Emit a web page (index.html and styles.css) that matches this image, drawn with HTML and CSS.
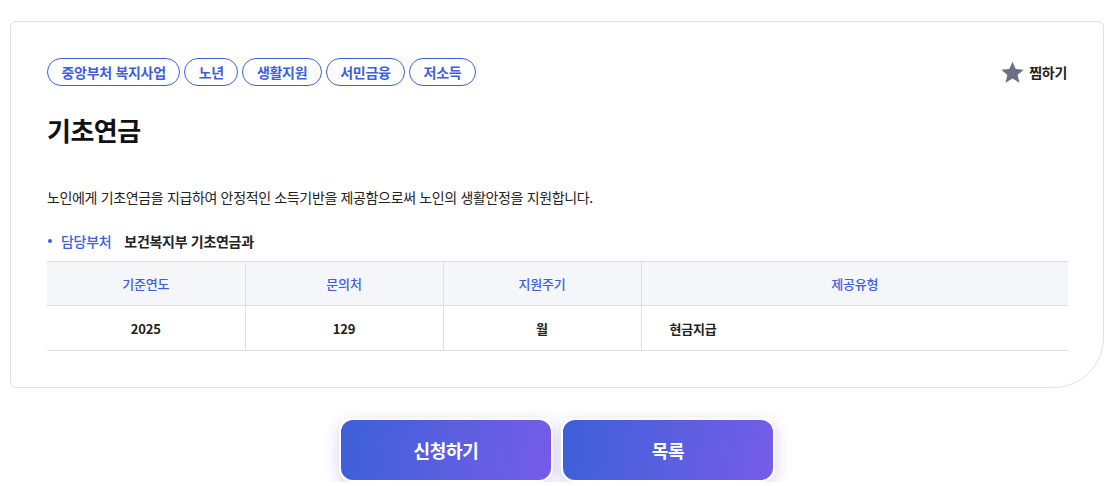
FILE: index.html
```html
<!DOCTYPE html>
<html lang="ko">
<head>
<meta charset="utf-8">
<link rel="stylesheet" href="styles.css">
</head>
<body>
<div class="wrap">
  <section class="card">
    <div class="top">
      <ul class="tags">
        <li class="tag">중앙부처 복지사업</li>
        <li class="tag">노년</li>
        <li class="tag">생활지원</li>
        <li class="tag">서민금융</li>
        <li class="tag">저소득</li>
      </ul>
      <button class="fav" type="button">
        <svg class="star" viewBox="1 1 22 22" width="23" height="23" aria-hidden="true"><path d="M12 1.6l3.1 7.1 7.6.6-5.8 5 1.8 7.5L12 17.8l-6.7 4 1.8-7.5-5.8-5 7.6-.6z" fill="#6c6f86"/></svg>
        <span>찜하기</span>
      </button>
    </div>
    <h1 class="title">기초연금</h1>
    <p class="desc">노인에게 기초연금을 지급하여 안정적인 소득기반을 제공함으로써 노인의 생활안정을 지원합니다.</p>
    <p class="dept"><span class="dept-label">담당부처</span><span class="dept-value">보건복지부 기초연금과</span></p>
    <table class="info">
      <thead>
        <tr><th class="c1">기준연도</th><th class="c2">문의처</th><th class="c3">지원주기</th><th class="c4">제공유형</th></tr>
      </thead>
      <tbody>
        <tr><td>2025</td><td>129</td><td>월</td><td class="left">현금지급</td></tr>
      </tbody>
    </table>
  </section>
  <div class="actions">
    <button class="btn" type="button">신청하기</button>
    <button class="btn" type="button">목록</button>
  </div>
</div>
</body>
</html>
```

FILE: styles.css
```css
* { box-sizing: border-box; }
html, body { margin: 0; padding: 0; background: #fff; }
body {
  font-family: "Noto Sans CJK KR", "Noto Sans", sans-serif;
  color: #222;
}
.wrap { padding: 21px 4px 0 10px; }
.card {
  border: 1px solid #e1e1e4;
  border-radius: 6px 6px 50px 6px;
  padding: 36px 35px 36px 36px;
  background: #fff;
}
.top {
  display: flex;
  align-items: center;
  justify-content: space-between;
}
.tags {
  display: flex;
  gap: 4px;
  list-style: none;
  margin: 0;
  padding: 0;
}
.tag {
  height: 28px;
  line-height: 26px;
  padding: 0 13.5px;
  border: 1px solid #3d5fdc;
  border-radius: 14px;
  color: #3d5fdc;
  font-size: 14px;
  font-weight: 700;
  letter-spacing: -0.3px;
}
.fav {
  display: flex;
  align-items: center;
  gap: 5px;
  background: none;
  border: 0;
  padding: 0;
  margin-right: 1px;
  font-family: inherit;
  font-size: 14px;
  font-weight: 700;
  letter-spacing: -0.3px;
  color: #222;
  cursor: pointer;
}
.star { display: block; }
.title {
  margin: 26px 0 0;
  font-size: 26px;
  line-height: 36px;
  font-weight: 700;
  color: #111;
  letter-spacing: -0.5px;
}
.desc {
  margin: 38px 0 0;
  font-size: 14px;
  line-height: 22px;
  color: #222;
  letter-spacing: -0.35px;
}
.dept {
  margin: 22px 0 0;
  font-size: 14px;
  line-height: 22px;
  display: flex;
  align-items: center;
  letter-spacing: -0.3px;
}
.dept-label {
  color: #3d5fdc;
  font-weight: 500;
  padding-left: 14px;
  position: relative;
  margin-right: 13px;
}
.dept-label::before {
  content: "";
  position: absolute;
  left: 1px;
  top: 9px;
  width: 4px;
  height: 4px;
  border-radius: 50%;
  background: #3d5fdc;
}
.dept-value { font-weight: 700; color: #222; }
.info {
  width: 100%;
  margin-top: 9px;
  border-collapse: collapse;
  table-layout: fixed;
  font-size: 13px;
  letter-spacing: -0.2px;
}
.info th, .info td {
  border-top: 1px solid #dfdfe3;
  border-bottom: 1px solid #dfdfe3;
  border-left: 1px solid #dfdfe3;
  text-align: center;
}
.info th:first-child, .info td:first-child { border-left: 0; }
.info th {
  height: 44px;
  background: #f5f6fa;
  color: #3d5fdc;
  font-weight: 500;
}
.info td {
  height: 45px;
  font-weight: 700;
  color: #222;
}
.info td.left { text-align: left; padding-left: 28px; }
.c1, .c2, .c3 { width: 198px; }
.actions {
  display: flex;
  justify-content: center;
  gap: 8px;
  margin-top: 30px;
}
.btn {
  width: 214px;
  height: 64px;
  border: 2px solid #fff;
  border-radius: 14px;
  background: linear-gradient(100deg, #3c5fd8 0%, #5a5fe0 50%, #765ce9 100%);
  box-shadow: 0 4px 16px rgba(96, 86, 220, 0.28);
  color: #fff;
  font-family: inherit;
  font-size: 18px;
  font-weight: 700;
  letter-spacing: -0.3px;
  cursor: pointer;
}
```
